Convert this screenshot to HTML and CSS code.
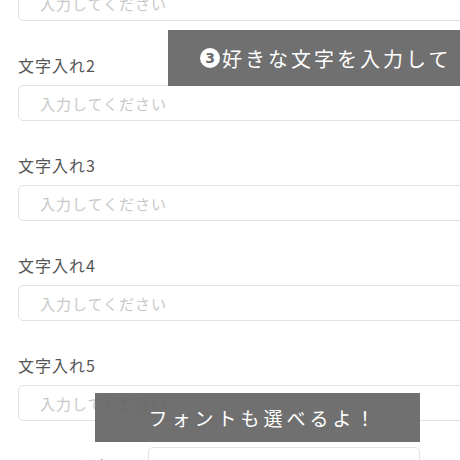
FILE: index.html
```html
<!DOCTYPE html>
<html lang="ja">
<head>
    <meta charset="UTF-8">
    <meta name="viewport" content="width=device-width, initial-scale=1.0">
    <title>文字入れ</title>
    <link rel="stylesheet" href="styles.css">
</head>
<body>
    <div class="form">
        <div class="field first">
            <input type="text" class="text-input" placeholder="入力してください">
        </div>
        <div class="field">
            <label class="field-label">文字入れ2</label>
            <input type="text" class="text-input" placeholder="入力してください">
        </div>
        <div class="field">
            <label class="field-label">文字入れ3</label>
            <input type="text" class="text-input" placeholder="入力してください">
        </div>
        <div class="field">
            <label class="field-label">文字入れ4</label>
            <input type="text" class="text-input" placeholder="入力してください">
        </div>
        <div class="field">
            <label class="field-label">文字入れ5</label>
            <input type="text" class="text-input" placeholder="入力してください">
        </div>
        <div class="font-row">
            <label class="field-label">フォント選択：</label>
            <div class="font-select"></div>
        </div>
    </div>

    <div class="note note-top"><span class="step-num">3</span>好きな文字を入力して</div>
    <div class="note note-bottom">フォントも選べるよ！</div>
</body>
</html>
```

FILE: styles.css
```css
html, body {
    overflow: hidden;
}

body {
    font-family: "Noto Sans CJK JP", "Noto Sans", sans-serif;
    background-color: #ffffff;
    margin: 0;
    padding: 0;
    width: 460px;
    height: 460px;
    position: relative;
}

.form {
    padding: 0 0 0 18px;
    margin-top: -15px;
}

.field {
    display: flex;
    flex-direction: column;
    margin-bottom: 34px;
}

.field-label {
    font-size: 16px;
    line-height: 20px;
    letter-spacing: 1px;
    color: #555555;
    margin-bottom: 10px;
}

.text-input {
    box-sizing: border-box;
    width: 480px;
    height: 36px;
    border: 1px solid #e2e2e2;
    border-radius: 5px;
    padding: 0 0 0 21px;
    font-family: inherit;
    font-size: 15px;
    letter-spacing: 1px;
    color: #333;
    background: #fff;
}

.text-input::placeholder {
    color: #c8c8c8;
}

.font-row {
    display: flex;
    align-items: center;
    margin-top: -8px;
}

.font-row .field-label {
    margin: 0;
    width: 130px;
    font-size: 15px;
    white-space: nowrap;
}

.font-select {
    width: 270px;
    height: 36px;
    border: 1px solid #e2e2e2;
    border-radius: 5px;
}

.note {
    position: absolute;
    background-color: rgba(96, 96, 96, 0.9);
    color: #ffffff;
    display: flex;
    align-items: center;
    white-space: nowrap;
}

.note-top {
    left: 168px;
    top: 30px;
    width: 300px;
    height: 56px;
    padding-left: 32px;
    box-sizing: border-box;
    font-size: 20px;
    letter-spacing: 3px;
}

.step-num {
    display: inline-flex;
    align-items: center;
    justify-content: center;
    width: 20px;
    height: 20px;
    border-radius: 50%;
    background-color: #ffffff;
    color: #6a6a6a;
    font-family: "DejaVu Sans", sans-serif;
    font-size: 14px;
    font-weight: bold;
    letter-spacing: 0;
    margin-right: 2px;
}

.note-bottom {
    left: 95px;
    top: 393px;
    width: 325px;
    height: 49px;
    justify-content: center;
    padding-left: 12px;
    box-sizing: border-box;
    font-size: 19px;
    letter-spacing: 4px;
}
```
